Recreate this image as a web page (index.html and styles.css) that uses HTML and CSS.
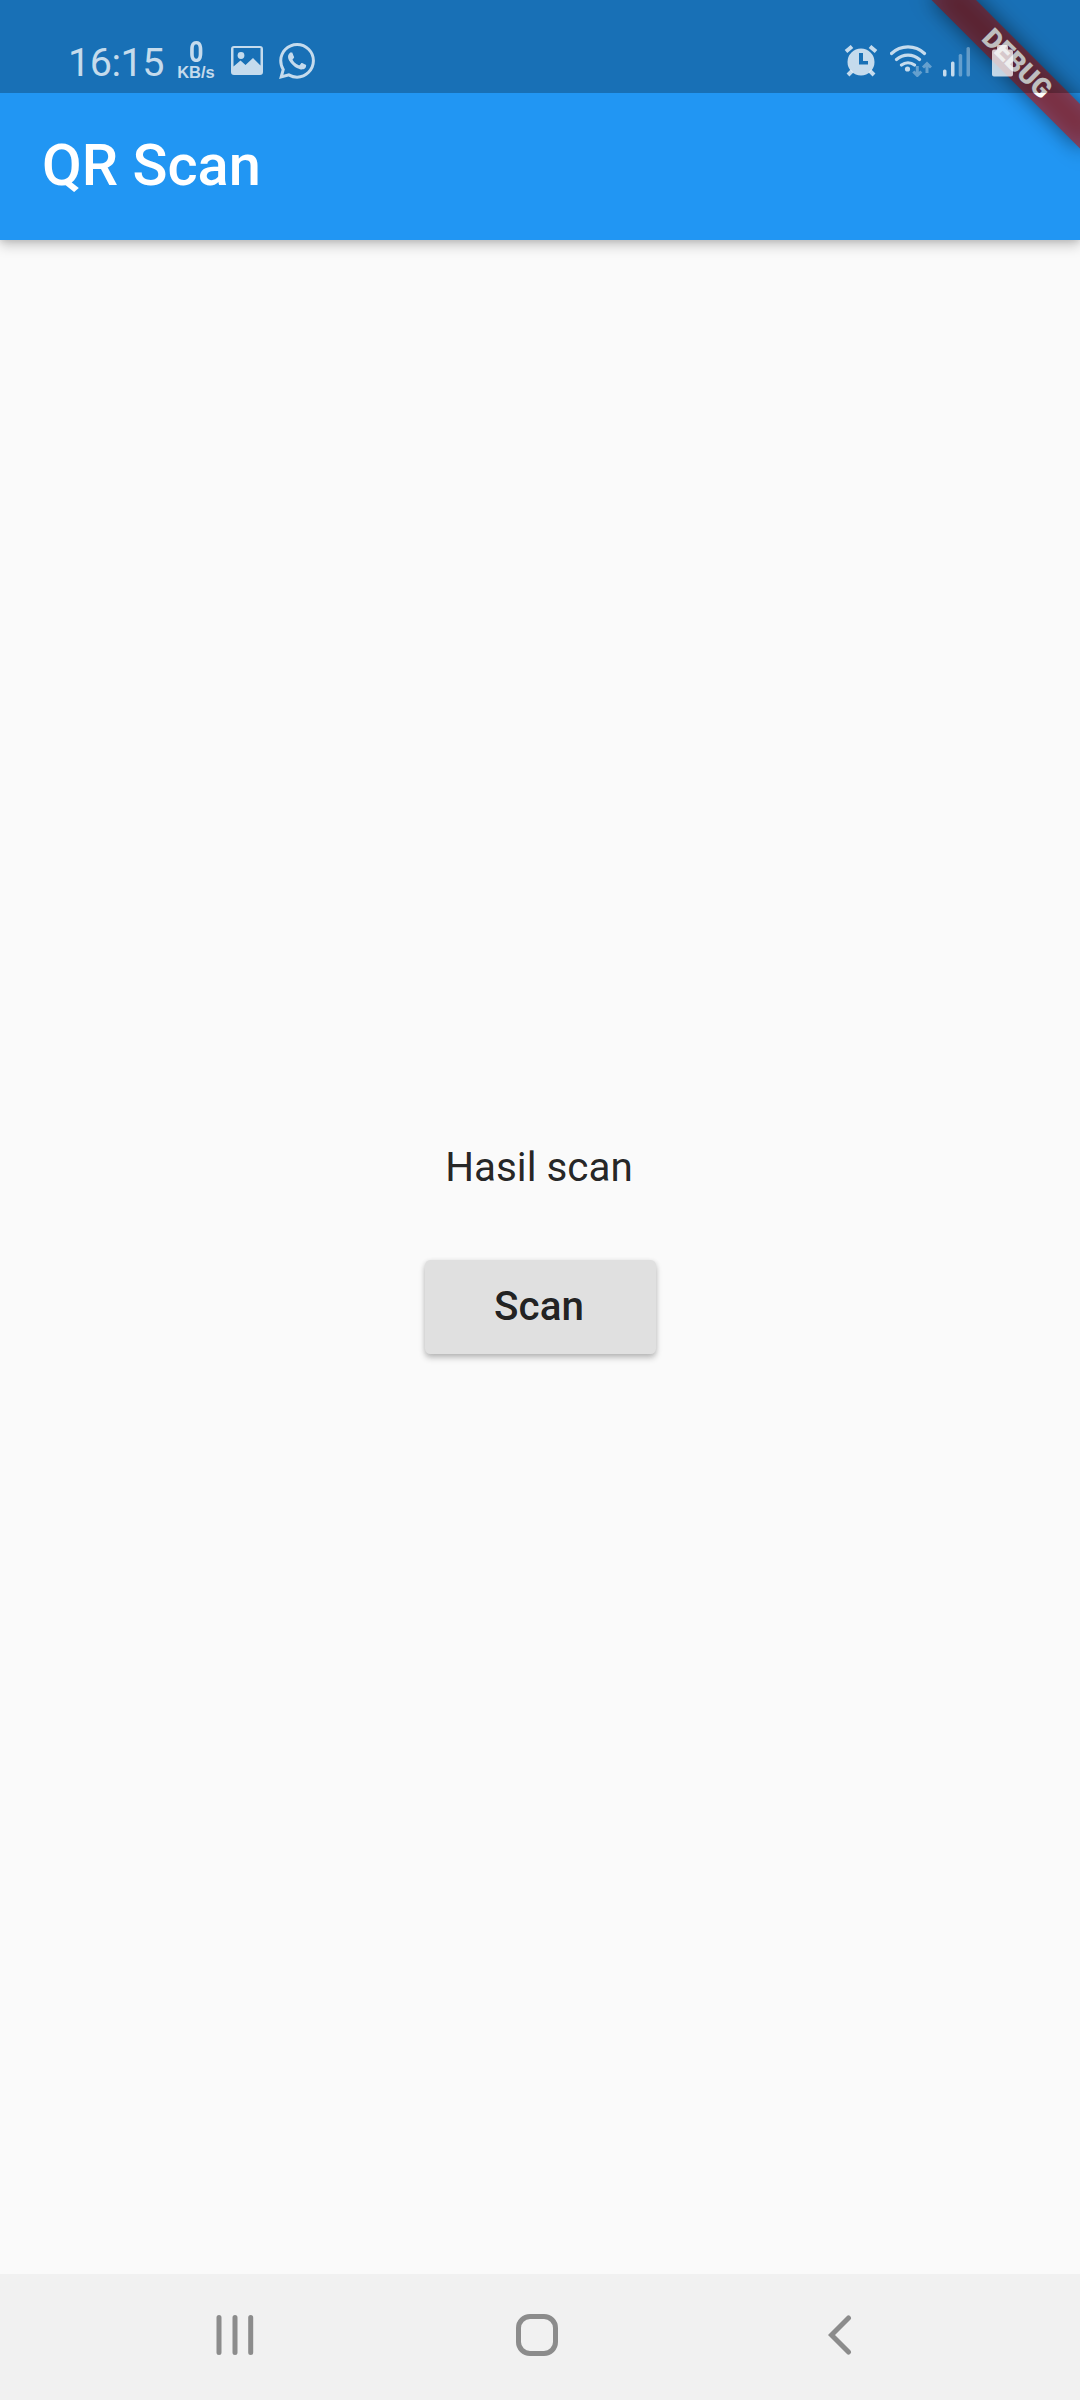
FILE: index.html
```html
<!DOCTYPE html>
<html lang="id">
<head>
<meta charset="utf-8">
<title>QR Scan</title>
<link rel="stylesheet" href="styles.css">
</head>
<body>
<div class="screen">
  <header class="top">
    <div class="app-bar"><h1 class="title">QR Scan</h1></div>
    <svg class="banner" viewBox="0 0 200 200" aria-hidden="true">
      <g transform="translate(200 0) rotate(45)">
        <rect class="banner-shadow" x="-105" y="73.5" width="210" height="31.5"/>
        <rect class="banner-fill" x="-105" y="73.5" width="210" height="31.5"/>
        <text class="banner-text" x="0.5" y="98.4">DEBUG</text>
      </g>
    </svg>
    <div class="status-bar">
      <div class="status-left">
        <span class="clock">16:15</span>
        <div class="net-speed"><span class="net-value">0</span><span class="net-unit">KB/s</span></div>
        <svg class="icon picture" width="32" height="30" viewBox="0 0 32 30">
          <path fill-rule="evenodd" d="M3 0h26a3 3 0 0 1 3 3v23a3 3 0 0 1-3 3H3a3 3 0 0 1-3-3V3a3 3 0 0 1 3-3zM2.500 2v18.500l7-6 5 4.500 7.500-7 7.500 7.500V2z"/>
          <circle cx="10" cy="9.500" r="3.400"/>
        </svg>
        <svg class="icon whatsapp" width="36" height="36" viewBox="0 0 24 24">
          <path d="M17.472 14.382c-.297-.149-1.758-.867-2.030-.967-.273-.099-.471-.148-.670.150-.197.297-.767.966-.940 1.164-.173.199-.347.223-.644.075-.297-.150-1.255-.463-2.390-1.475-.883-.788-1.480-1.761-1.653-2.059-.173-.297-.018-.458.130-.606.134-.133.298-.347.446-.520.149-.174.198-.298.298-.497.099-.198.050-.371-.025-.520-.075-.149-.669-1.612-.916-2.207-.242-.579-.487-.500-.669-.510-.173-.008-.371-.010-.570-.010-.198 0-.520.074-.792.372-.272.297-1.040 1.016-1.040 2.479 0 1.462 1.065 2.875 1.213 3.074.149.198 2.096 3.200 5.077 4.487.709.306 1.262.489 1.694.625.712.227 1.360.195 1.871.118.571-.085 1.758-.719 2.006-1.413.248-.694.248-1.289.173-1.413-.074-.124-.272-.198-.570-.347m-5.421 7.403h-.004a9.870 9.870 0 0 1-5.031-1.378l-.361-.214-3.741.982.998-3.648-.235-.374a9.860 9.860 0 0 1-1.510-5.260c.001-5.450 4.436-9.884 9.888-9.884 2.640 0 5.122 1.030 6.988 2.898a9.825 9.825 0 0 1 2.893 6.994c-.003 5.450-4.437 9.884-9.885 9.884m8.413-18.297A11.815 11.815 0 0 0 12.050 0C5.495 0 .160 5.335.157 11.892c0 2.096.547 4.142 1.588 5.945L.057 24l6.305-1.654a11.882 11.882 0 0 0 5.683 1.448h.005c6.554 0 11.890-5.335 11.893-11.893a11.821 11.821 0 0 0-3.480-8.413z"/>
        </svg>
      </div>
      <div class="status-right">
        <svg class="icon" width="34" height="32" viewBox="0 0 34 32">
          <path fill-rule="evenodd" d="M17 3.500a13.500 13.500 0 1 1 0 27 13.500 13.500 0 0 1 0-27zM15 8v11.500h9V16h-5V8z"/>
          <path class="line alarm-line" d="M2 6.500 8 1.500M26 1.500l6 5M8 26l-4 4M26 26l4 4"/>
        </svg>
        <svg class="icon wifi" width="42" height="32" viewBox="0 0 42 32">
          <path class="line wifi-line" d="M1.500 8.500a24 24 0 0 1 33 0M6.500 14.500a17.500 17.500 0 0 1 23 0M11.500 20a10.500 10.500 0 0 1 13 0"/>
          <circle cx="17.500" cy="24" r="2.600"/>
          <path class="line dim-line" d="M27.300 21v9M23.300 26.500l4 4 4-4M37 28v-9M33 22.500l4-4 4 4"/>
        </svg>
        <svg class="icon signal" width="28" height="32" viewBox="0 0 28 32">
          <rect x="0" y="24.500" width="3.500" height="7" rx="1.500"/><rect x="8" y="16.500" width="3.500" height="15" rx="1.500"/>
          <rect class="dim" x="15.700" y="9" width="3.500" height="22.500" rx="1.500"/><rect class="dim" x="23.500" y="2" width="3.500" height="29.500" rx="1.500"/>
        </svg>
        <svg class="icon battery" width="21" height="32" viewBox="0 0 21 32">
          <path d="M7 0h7a2 2 0 0 1 2 2v2.500h3a2 2 0 0 1 2 2V29.500a2 2 0 0 1-2 2H2a2 2 0 0 1-2-2v-23a2 2 0 0 1 2-2h3V2a2 2 0 0 1 2-2z"/>
        </svg>
      </div>
    </div>
  </header>
  <main class="content">
    <p class="result">Hasil scan</p>
    <button class="scan" type="button">Scan</button>
  </main>
  <nav class="nav-bar">
    <svg class="nav-icon recents" width="38" height="42" viewBox="0 0 38 42"><path d="M3 3.500v35M19 3.500v35M34.700 3.500v35"/></svg>
    <svg class="nav-icon home" width="42" height="42" viewBox="0 0 42 42"><rect x="2.500" y="2.500" width="37" height="37" rx="11.500"/></svg>
    <svg class="nav-icon back" width="24" height="42" viewBox="0 0 24 42"><path d="M20.500 4 3.500 21l17 17"/></svg>
  </nav>
</div>
</body>
</html>
```
FILE: styles.css
```css
* { box-sizing: border-box; }
body { margin: 0; font-family: Roboto, sans-serif; }
.screen { display: flex; flex-direction: column; width: 1080px; height: 2400px; background: #fafafa; overflow: hidden; }

.top { position: relative; height: 240px; flex: none; background: #2196f3; box-shadow: 0 5px 12px rgba(0,0,0,.22), 0 1px 6px rgba(0,0,0,.1); }
.app-bar { display: flex; align-items: center; height: 240px; padding: 93px 42px 4px; }
.title { margin: 0; font-size: 57.75px; font-weight: 500; line-height: 68px; color: #fff; }

.banner { position: absolute; top: 0; right: 0; width: 200px; height: 200px; }
.banner-shadow { fill: #000; fill-opacity: .5; filter: blur(10.400px); }
.banner-fill { fill: #b71c1c; fill-opacity: .627; }
.banner-text { fill: #fff; font-size: 26.775px; font-weight: 900; text-anchor: middle; }

.status-bar { position: absolute; inset: 0 0 auto; display: flex; justify-content: space-between; height: 93px; padding: 0 67px 0 68px; background: rgba(0,0,0,.25); color: rgba(255,255,255,.75); }
.status-left, .status-right { display: flex; align-items: flex-start; }
.icon { display: block; fill: currentColor; }
.clock { width: 98px; margin-top: 40px; font-size: 39.500px; line-height: 46px; letter-spacing: -.5px; }
.net-speed { display: flex; flex-direction: column; align-items: center; width: 38px; margin: 42px 0 0 11px; font-weight: 700; }
.net-value { padding-left: 1px; font-size: 29px; line-height: 21px; transform: scaleX(.87); }
.net-unit { margin-top: 4px; font-family: "Liberation Sans", sans-serif; font-size: 16.500px; line-height: 11px; }
.picture { margin: 46px 0 0 16px; }
.whatsapp { margin: 43px 0 0 16px; }
.status-right { padding-top: 45px; }
.line { fill: none; stroke: currentColor; stroke-linecap: round; }
.alarm-line { stroke-width: 4; stroke-linecap: butt; }
.wifi-line { stroke-width: 3.200; }
.dim-line { stroke-width: 3; stroke-linecap: butt; opacity: .45; }
.dim { opacity: .45; }
.wifi { margin-left: 12px; }
.signal { margin-left: 11px; }
.battery { margin-left: 21px; }

.content { display: flex; flex: 1; flex-direction: column; align-items: center; padding-top: 904px; }
.result { margin: 0; padding-right: 2px; font-size: 40.425px; line-height: 48px; color: rgba(0,0,0,.87); }
.scan { width: 231px; height: 94px; margin: 68px 0 0; padding: 0 2px 0 0; border: 0; border-radius: 5.250px; background: #e0e0e0; color: rgba(0,0,0,.87); font: 500 40.425px/48px Roboto, sans-serif; box-shadow: 0 4px 6px rgba(0,0,0,.22), 0 1px 5px rgba(0,0,0,.1); }

.nav-bar { display: flex; flex: none; align-items: flex-start; height: 126px; padding: 40px 0 0 216px; background: #f1f1f1; }
.nav-icon { fill: none; stroke: #8c8c8c; stroke-width: 5; stroke-linecap: round; }
.home { margin-left: 262px; }
.back { margin-left: 270px; }
```
